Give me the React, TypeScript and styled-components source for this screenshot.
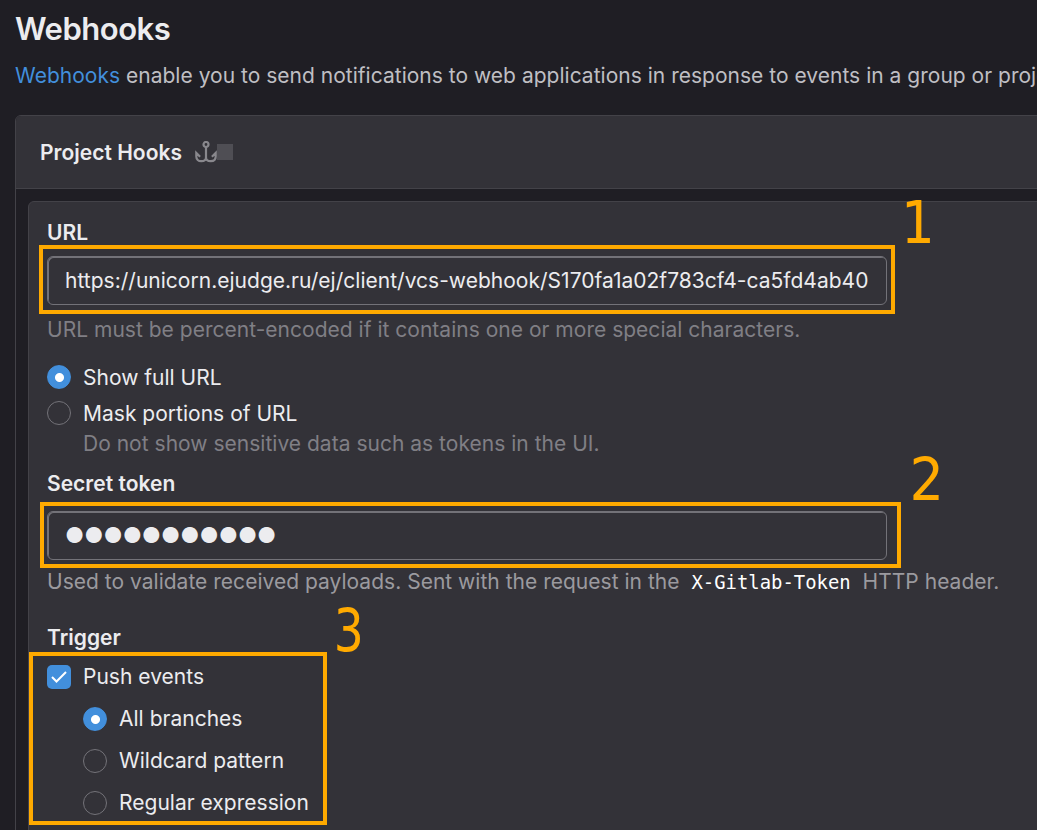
import React from "react";
import styled, { createGlobalStyle } from "styled-components";

const GlobalStyle = createGlobalStyle`
  * { box-sizing: border-box; }
  html, body { margin: 0; background: #1f1e24; overflow: hidden; }
  body {
    font-family: Inter, "Liberation Sans", sans-serif;
    font-size: 21px;
    line-height: 30px;
    letter-spacing: 0.016px;
    color: #ececef;
    white-space: nowrap;
  }
`;

const Page = styled.main`
  width: 1037px;
  height: 830px;
  overflow: hidden;
  padding: 9px 0 0 15px;
`;

const Title = styled.h1`
  margin: 0;
  font-size: 31px;
  line-height: 40px;
  font-weight: 600;
  letter-spacing: -0.48px;
`;

const Intro = styled.p`
  margin: 12px 0 24px;
  color: #bfbfc3;
`;

const Link = styled.a`
  color: #428fdc;
`;

const Card = styled.section`
  width: 1060px;
  height: 760px;
  border: 1px solid #434248;
  border-radius: 6px;
  overflow: hidden;
`;

const CardHeader = styled.header`
  display: flex;
  align-items: center;
  height: 73px;
  padding-left: 24px;
  background: #333238;
  border-bottom: 1px solid #434248;
`;

const CardTitle = styled.h2`
  margin: 0 13px 0 0;
  padding-top: 2px;
  font-size: 21px;
  font-weight: 600;
`;

const CountChip = styled.span`
  width: 16px;
  height: 16px;
  background: #4f4e54;
`;

const Form = styled.form`
  position: relative;
  margin: 12px 0 0 12px;
  height: 700px;
  padding: 15px 0 0 18px;
  background: #333238;
  border: 1px solid #434248;
  border-radius: 6px;
`;

const Label = styled.div<{ $top?: number }>`
  height: 30px;
  margin-top: ${(p) => p.$top ?? 0}px;
  line-height: 32px;
  font-weight: 600;
`;

const Field = styled.div<{ $top: number }>`
  display: flex;
  align-items: center;
  width: 840px;
  height: 49px;
  margin-top: ${(p) => p.$top}px;
  padding-left: 17px;
  border: 1px solid #737278;
  border-radius: 6px;
  box-shadow: inset 1px 1px 0 #737278;
`;

const Help = styled.div<{ $top: number; $indent?: number; $bright?: boolean }>`
  height: 30px;
  line-height: 32px;
  margin-top: ${(p) => p.$top}px;
  margin-left: ${(p) => p.$indent ?? 0}px;
  color: ${(p) => (p.$bright ? "#9b9a9f" : "#807f85")};
`;

const Code = styled.code`
  margin: 0 6px;
  font-family: "DejaVu Sans Mono", monospace;
  font-size: 18.9px;
  letter-spacing: 0;
  color: #fff;
`;

const Option = styled.div<{ $top: number; $indent?: number; $drop?: number }>`
  display: flex;
  align-items: center;
  gap: 12px;
  height: 30px;
  line-height: ${(p) => 30 + 2 * (p.$drop ?? 0)}px;
  margin-top: ${(p) => p.$top}px;
  margin-left: ${(p) => p.$indent ?? 0}px;
`;

const OptionText = styled.span<{ $drop?: boolean }>`
  padding-top: ${(p) => (p.$drop ? 2 : 0)}px;
`;

const Radio = styled.span<{ $on?: boolean }>`
  width: 24px;
  height: 24px;
  border-radius: 50%;
  border: 1px solid ${(p) => (p.$on ? "#428fdc" : "#737278")};
  background: ${(p) =>
    p.$on ? "radial-gradient(circle at 11.5px 11.5px, #fff 4px, #428fdc 5px)" : "transparent"};
`;

const Checkbox = styled.span`
  display: grid;
  place-items: center;
  width: 24px;
  height: 24px;
  border-radius: 5px;
  background: #428fdc;
`;

const Highlight = styled.div<{ $x: number; $y: number; $w: number; $h: number }>`
  position: absolute;
  left: ${(p) => p.$x}px;
  top: ${(p) => p.$y}px;
  width: ${(p) => p.$w}px;
  height: ${(p) => p.$h}px;
  border: 4px solid #ffaa00;
`;

const Step = styled.span<{ $x: number; $y: number; $stretch: number }>`
  position: absolute;
  left: ${(p) => p.$x}px;
  top: ${(p) => p.$y}px;
  font-family: "DejaVu Sans", sans-serif;
  font-size: 59px;
  line-height: 60px;
  color: #ffaa00;
  transform: scaleX(${(p) => p.$stretch});
`;

const AnchorIcon = () => (
  <svg width="22" height="22" viewBox="0 0 22 22" fill="none" stroke="#89888d" strokeWidth="2.2">
    <circle cx="11" cy="3.5" r="2.500" />
    <path d="M11 6v10.500M11 16.500c0 2.300-2 3.700-4.800 3.700S1.300 18.500 1.300 15.500v-3.500l3.800 3.800M11 16.500c0 2.300 2 3.700 4.800 3.700s4.900-1.700 4.900-4.700v-3.500l-3.800 3.800" />
  </svg>
);

export default function App() {
  return (
    <>
      <GlobalStyle />
      <Page>
        <Title>Webhooks</Title>
        <Intro>
          <Link>Webhooks</Link> enable you to send notifications to web applications in response to events in a group or proje
        </Intro>
        <Card>
          <CardHeader>
            <CardTitle>Project Hooks</CardTitle>
            <AnchorIcon />
            <CountChip />
          </CardHeader>
          <Form>
            <Label>URL</Label>
            <Field $top={9}>https://unicorn.ejudge.ru/ej/client/vcs-webhook/S170fa1a02f783cf4-ca5fd4ab40</Field>
            <Help $top={9}>URL must be percent-encoded if it contains one or more special characters.</Help>
            <Option $top={18}>
              <Radio $on />
              <OptionText $drop>Show full URL</OptionText>
            </Option>
            <Option $top={6}>
              <Radio />
              <OptionText $drop>Mask portions of URL</OptionText>
            </Option>
            <Help $top={0} $indent={36}>Do not show sensitive data such as tokens in the UI.</Help>
            <Label $top={10}>Secret token</Label>
            <Field $top={13}>●●●●●●●●●●●</Field>
            <Help $top={6} $bright>
              Used to validate received payloads. Sent with the request in the <Code>X-Gitlab-Token</Code> HTTP header.
            </Help>
            <Label $top={26}>Trigger</Label>
            <Option $top={10}>
              <Checkbox>
                <svg width="16" height="12" viewBox="0 0 16 12" fill="none" stroke="#fff" strokeWidth="2">
                  <path d="M1 6l4.500 4.500L15 1" />
                </svg>
              </Checkbox>
              <OptionText>Push events</OptionText>
            </Option>
            <Option $top={12} $indent={36}>
              <Radio $on />
              <OptionText>All branches</OptionText>
            </Option>
            <Option $top={12} $indent={36}>
              <Radio />
              <OptionText>Wildcard pattern</OptionText>
            </Option>
            <Option $top={12} $indent={36}>
              <Radio />
              <OptionText>Regular expression</OptionText>
            </Option>
            <Highlight $x={10} $y={43} $w={856} $h={69} />
            <Highlight $x={11} $y={300} $w={861} $h={66} />
            <Highlight $x={0} $y={450} $w={298} $h={173} />
            <Step $x={870} $y={-9} $stretch={0.9}>1</Step>
            <Step $x={879} $y={248} $stretch={0.92}>2</Step>
            <Step $x={301} $y={399} $stretch={0.8}>3</Step>
          </Form>
        </Card>
      </Page>
    </>
  );
}
